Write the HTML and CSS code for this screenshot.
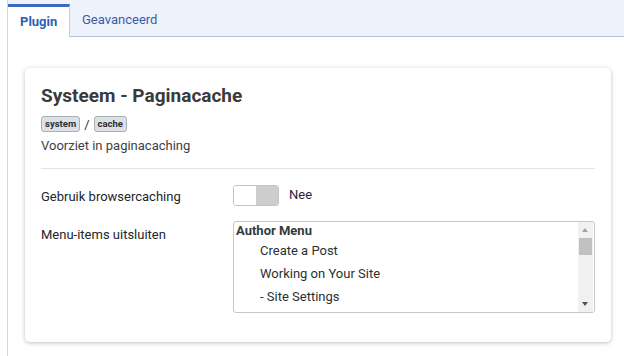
FILE: index.html
```html
<!DOCTYPE html>
<html>
<head>
    <link rel="stylesheet" href="styles.css">
    <title>Systeem - Paginacache</title>
</head>
<body>
    <div class="page">
        <div class="tabs">
            <div class="tab active">Plugin</div>
            <div class="tab">Geavanceerd</div>
        </div>
        <div class="content">
            <div class="card">
                <h2 class="title">Systeem - Paginacache</h2>
                <div class="badges">
                    <span class="badge">system</span>
                    <span class="sep">/</span>
                    <span class="badge">cache</span>
                </div>
                <p class="desc">Voorziet in paginacaching</p>
                <hr>
                <div class="row">
                    <div class="label label-toggle">Gebruik browsercaching</div>
                    <div class="control toggle-wrap">
                        <div class="toggle">
                            <span class="half on"></span>
                            <span class="half off"></span>
                        </div>
                        <span class="toggle-text">Nee</span>
                    </div>
                </div>
                <div class="row">
                    <div class="label label-list">Menu-items uitsluiten</div>
                    <div class="control">
                        <div class="listbox">
                            <div class="items">
                                <div class="group">Author Menu</div>
                                <div class="option">Create a Post</div>
                                <div class="option">Working on Your Site</div>
                                <div class="option">- Site Settings</div>
                                <div class="option">- Template Settings</div>
                            </div>
                            <div class="scrollbar">
                                <div class="arrow up"></div>
                                <div class="thumb"></div>
                                <div class="track"></div>
                                <div class="arrow down"></div>
                            </div>
                        </div>
                    </div>
                </div>
            </div>
        </div>
    </div>
</body>
</html>
```

FILE: styles.css
```css
html, body {
    margin: 0;
    padding: 0;
    background: #fff;
}
body {
    font-family: Roboto, "Liberation Sans", sans-serif;
    color: #22262a;
    font-size: 13px;
}
.page {
    margin-left: 7px;
    border-left: 1px solid #c9d6e8;
    height: 356px;
}
.tabs {
    display: flex;
    background: #eef2fa;
    border-bottom: 1px solid #b4c2d6;
    padding-top: 4px;
    height: 32px;
}
.tab {
    padding: 0 12px;
    line-height: 31px;
    font-size: 13px;
    color: #3a5cab;
}
.tab.active {
    width: 37px;
    background: #fff;
    border-top: 3px solid #3c6ac0;
    border-right: 1px solid #c5cfdd;
    margin-bottom: -1px;
    font-weight: bold;
    color: #2f5fb3;
    text-align: center;
    line-height: 30px;
}
.content {
    padding: 31px 13px 0 17px;
}
.card {
    width: 554px;
    padding: 15px 16px 29px;
    border-radius: 5px;
    background: #fff;
    box-shadow: 0 1px 4px rgba(0, 0, 0, 0.25);
}
.title {
    margin: 0;
    font-size: 19px;
    line-height: 25px;
    font-weight: bold;
    color: #3a3a3a;
}
.badges {
    display: flex;
    align-items: center;
    gap: 4px;
    margin-top: 8px;
}
.badge {
    display: inline-block;
    font-size: 9.5px;
    font-weight: bold;
    line-height: 14px;
    padding: 0 3px;
    border: 1px solid #a8b0b8;
    border-radius: 3px;
    background: #dde1e5;
    color: #2c3035;
}
.sep {
    font-size: 13px;
    color: #333;
}
.desc {
    margin: 4px 0 0;
    line-height: 20px;
    color: #3e4246;
}
hr {
    border: 0;
    border-top: 1px solid #e2e4e6;
    margin: 12px 0 14px;
}
.row {
    display: flex;
    margin-bottom: 14px;
}
.row:last-child {
    margin-bottom: 0;
}
.label {
    width: 192px;
    line-height: 20px;
}
.label-toggle {
    padding-top: 4px;
}
.label-list {
    padding-top: 4px;
}
.control {
    flex: 1;
}
.toggle-wrap {
    display: flex;
    align-items: center;
}
.toggle {
    display: flex;
    width: 44px;
    height: 19px;
    border: 1px solid #c4c4c4;
    border-radius: 3px;
    overflow: hidden;
}
.half {
    flex: 1;
}
.half.on {
    background: #fff;
}
.half.off {
    background: #cdcdcd;
}
.toggle-text {
    margin-left: 10px;
    margin-top: -2px;
    color: #2a1f3d;
}
.listbox {
    display: flex;
    height: 90px;
    border: 1px solid #c4c8cc;
    border-radius: 3px;
    overflow: hidden;
}
.items {
    flex: 1;
    padding: 0 2px;
    overflow: hidden;
}
.group {
    font-weight: bold;
    line-height: 17px;
    color: #333a40;
}
.option {
    padding-left: 24px;
    line-height: 23px;
    color: #2c3034;
}
.scrollbar {
    width: 15px;
    display: flex;
    flex-direction: column;
    background: #f1f1f1;
    margin: 0 1px 0 0;
}
.arrow {
    height: 16px;
    position: relative;
}
.arrow::after {
    content: "";
    position: absolute;
    left: 4px;
    top: 6px;
    border-left: 3.5px solid transparent;
    border-right: 3.5px solid transparent;
}
.arrow.up::after {
    border-bottom: 4px solid #a3a3a3;
}
.arrow.down::after {
    border-top: 4px solid #505050;
}
.thumb {
    height: 17px;
    margin: 0 1px;
    background: #c1c1c1;
}
.track {
    flex: 1;
}
```
